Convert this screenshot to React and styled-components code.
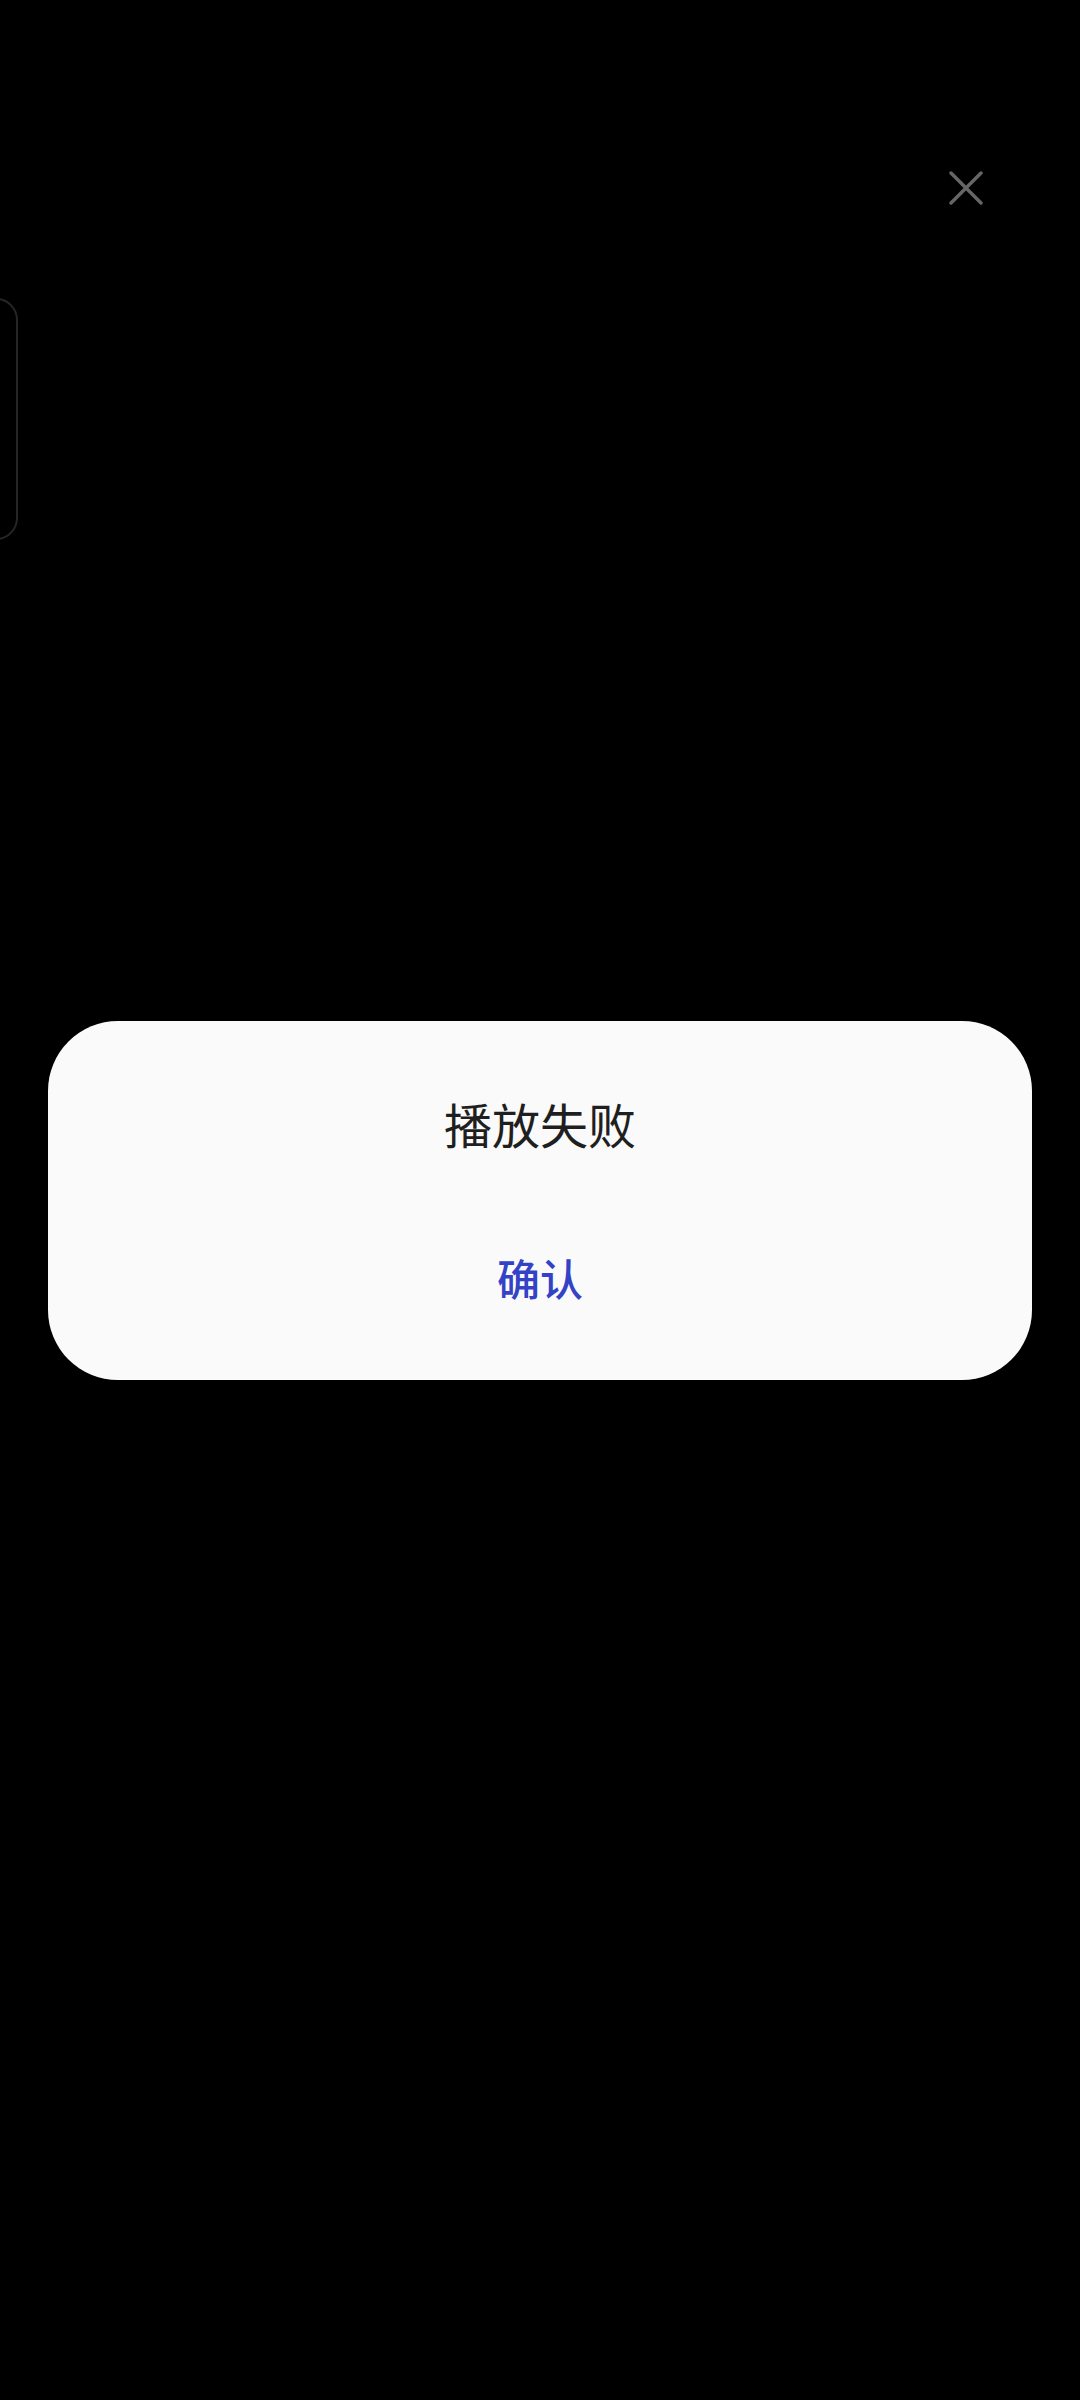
import { createGlobalStyle } from "styled-components";
import styled from "styled-components";

const GlobalStyle = createGlobalStyle`
  html, body {
    margin: 0;
    padding: 0;
    background: #000;
  }
  body {
    font-family: "Noto Sans CJK SC", "Noto Sans", sans-serif;
  }
`;

const Screen = styled.div`
  position: relative;
  width: 1080px;
  min-height: 2400px;
  background: #000;
  overflow: hidden;
`;

const TopBar = styled.div`
  display: flex;
  justify-content: flex-end;
  padding: 156px 82px 0 0;
`;

const CloseButton = styled.button`
  width: 64px;
  height: 64px;
  display: flex;
  align-items: center;
  justify-content: center;
  background: none;
  border: none;
  padding: 0;
  cursor: pointer;
`;

const SideCard = styled.div`
  margin: 78px 0 0 -82px;
  width: 100px;
  height: 242px;
  border: 2px solid #262626;
  border-radius: 22px;
  box-sizing: border-box;
`;

const Overlay = styled.div`
  position: fixed;
  inset: 0;
  display: flex;
  align-items: center;
  justify-content: center;
`;

const Dialog = styled.div`
  width: 984px;
  height: 359px;
  box-sizing: border-box;
  padding: 70px 0 43px;
  background: #fafafa;
  border-radius: 70px;
  display: flex;
  flex-direction: column;
  align-items: center;
`;

const Title = styled.h2`
  margin: 0;
  height: 64px;
  line-height: 64px;
  font-size: 48px;
  font-weight: 400;
  color: #1f1f1f;
`;

const ConfirmButton = styled.button`
  margin-top: 62px;
  width: 100%;
  height: 120px;
  background: none;
  border: none;
  font-family: inherit;
  font-size: 43px;
  font-weight: 500;
  color: #3342c6;
  cursor: pointer;
`;

function CloseIcon() {
  return (
    <svg width="34" height="34" viewBox="0 0 34 34">
      <path
        d="M2 2 L32 32 M32 2 L2 32"
        stroke="#666"
        strokeWidth="3.4"
        strokeLinecap="round"
        fill="none"
      />
    </svg>
  );
}

export default function App() {
  return (
    <Screen>
      <GlobalStyle />
      <TopBar>
        <CloseButton aria-label="关闭">
          <CloseIcon />
        </CloseButton>
      </TopBar>
      <SideCard />
      <Overlay>
        <Dialog>
          <Title>播放失败</Title>
          <ConfirmButton>确认</ConfirmButton>
        </Dialog>
      </Overlay>
    </Screen>
  );
}
